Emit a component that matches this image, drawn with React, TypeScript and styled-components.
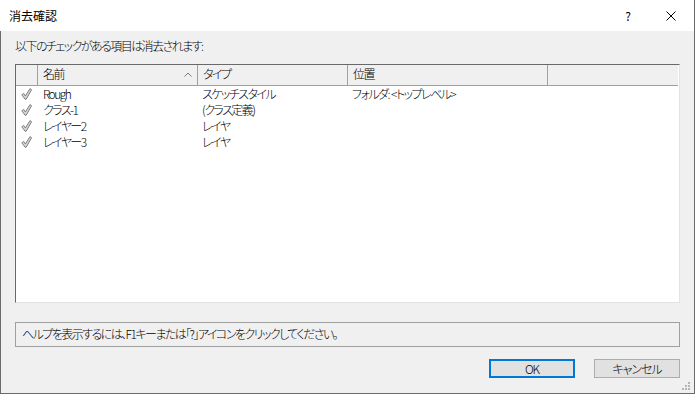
import React from 'react';
import styled, { createGlobalStyle } from 'styled-components';

const Global = createGlobalStyle`
  html, body { margin: 0; padding: 0; background: #ffffff; }
  body {
    font-family: "Noto Sans CJK JP", "Noto Sans", sans-serif;
    font-size: 12px;
    color: #000;
    font-feature-settings: "palt" 1;
  }
  * { box-sizing: border-box; }
`;

const Window = styled.div`
  position: relative;
  width: 695px;
  height: 394px;
  display: flex;
  flex-direction: column;
  border-right: 1px solid #6b6b6b;
  border-bottom: 1px solid #6b6b6b;
  background: #f0f0f0;
`;

const TitleBar = styled.div`
  height: 31px;
  flex: none;
  background: #ffffff;
  display: flex;
  align-items: center;
  padding-left: 9px;
`;

const Title = styled.div`
  flex: 1;
  font-size: 12px;
  line-height: 16px;
`;

const CaptionButton = styled.div<{ $shift?: number }>`
  width: 46px;
  height: 31px;
  display: flex;
  align-items: center;
  justify-content: center;
  font-size: 12px;
  line-height: 16px;
  padding-left: ${(p) => p.$shift ?? 0}px;
`;

const Body = styled.div`
  flex: 1;
  display: flex;
  flex-direction: column;
  border-left: 1px solid #6b6b6b;
  padding: 7px 14px 0 14px;
  font-weight: 300;
  letter-spacing: -1.55px;
`;

const Prompt = styled.div`
  height: 16px;
  line-height: 16px;
`;

const List = styled.div`
  margin-top: 10px;
  height: 239px;
  background: #ffffff;
  border: 1px solid;
  border-color: #696969 #e3e3e3 #e3e3e3 #696969;
  display: flex;
  flex-direction: column;
`;

const Header = styled.div`
  display: flex;
  height: 21px;
  flex: none;
  background: #f0f0f0;
  border-bottom: 1px solid #a0a0a0;
  margin-right: 1px;
`;

const HeaderCell = styled.div<{ $w?: number; $last?: boolean }>`
  ${(p) => (p.$w ? `width: ${p.$w}px; flex: none;` : 'flex: 1;')}
  border-right: ${(p) => (p.$last ? 'none' : '1px solid #a0a0a0')};
  display: flex;
  align-items: center;
  justify-content: space-between;
  padding: 0 5px 2px 5px;
  line-height: 16px;
  white-space: nowrap;
`;

const Row = styled.div`
  display: flex;
  height: 16px;
  line-height: 16px;
`;

const Cell = styled.div<{ $w: number; $pad?: number }>`
  width: ${(p) => p.$w}px;
  flex: none;
  padding-left: ${(p) => p.$pad ?? 5}px;
  white-space: pre;
`;

const IconCell = styled.div`
  width: 22px;
  flex: none;
  display: flex;
  align-items: center;
  padding-left: 5px;
`;

const HelpBox = styled.div`
  margin-top: 19px;
  height: 25px;
  border: 1px solid #a0a0a0;
  display: flex;
  align-items: center;
  padding: 0 0 1px 6px;
  line-height: 16px;
`;

const ButtonRow = styled.div`
  margin-top: 12px;
  display: flex;
  justify-content: flex-end;
  gap: 19px;
`;

const Button = styled.div<{ $default?: boolean }>`
  width: 86px;
  height: 19px;
  background: #e1e1e1;
  border: ${(p) => (p.$default ? '2px solid #0078d7' : '1px solid #adadad')};
  display: flex;
  align-items: center;
  justify-content: center;
  line-height: 16px;
  letter-spacing: -1px;
`;

const Grip = styled.svg`
  position: absolute;
  right: 3px;
  bottom: 2px;
`;

const Check = () => (
  <svg width="11" height="12" viewBox="0 0 11 12">
    <path
      d="M0.8 6.8 L2.7 5.4 L4.4 8 L9 0.6 L10.6 1.7 L5.2 11.2 L4 11.2 Z"
      fill="#d6d6d6"
      stroke="#808080"
      strokeWidth="1"
      strokeLinejoin="round"
    />
  </svg>
);

const SortUp = () => (
  <svg width="8" height="5" viewBox="0 0 8 5">
    <polyline points="0.5,4.5 4,1 7.5,4.5" fill="none" stroke="#7a7a7a" strokeWidth="1" />
  </svg>
);

const CloseIcon = () => (
  <svg width="10" height="10" viewBox="0 0 10 10">
    <line x1="0.5" y1="0.5" x2="9.5" y2="9.5" stroke="#000" strokeWidth="1" />
    <line x1="9.5" y1="0.5" x2="0.5" y2="9.5" stroke="#000" strokeWidth="1" />
  </svg>
);

const rows = [
  { name: 'Rough', type: 'スケッチスタイル', loc: 'フォルダ:  <トップレベル>' },
  { name: 'クラス-1', type: '(クラス定義)', loc: '' },
  { name: 'レイヤー2', type: 'レイヤ', loc: '' },
  { name: 'レイヤー3', type: 'レイヤ', loc: '' },
];

export default function App() {
  return (
    <>
      <Global />
      <Window>
        <TitleBar>
          <Title>消去確認</Title>
          <CaptionButton $shift={6}>?</CaptionButton>
          <CaptionButton>
            <CloseIcon />
          </CaptionButton>
        </TitleBar>
        <Body>
          <Prompt>以下のチェックがある項目は消去されます:</Prompt>
          <List>
            <Header>
              <HeaderCell $w={22} />
              <HeaderCell $w={160}>
                <span>名前</span>
                <SortUp />
              </HeaderCell>
              <HeaderCell $w={150}>タイプ</HeaderCell>
              <HeaderCell $w={200}>位置</HeaderCell>
              <HeaderCell $last />
            </Header>
            {rows.map((r) => (
              <Row key={r.name}>
                <IconCell>
                  <Check />
                </IconCell>
                <Cell $w={160}>{r.name}</Cell>
                <Cell $w={150} $pad={4}>{r.type}</Cell>
                <Cell $w={200} $pad={4}>{r.loc}</Cell>
              </Row>
            ))}
          </List>
          <HelpBox>ヘルプを表示するには、F1キーまたは「?」アイコンをクリックしてください。</HelpBox>
          <ButtonRow>
            <Button $default>OK</Button>
            <Button>キャンセル</Button>
          </ButtonRow>
        </Body>
        <Grip width="9" height="9" viewBox="0 0 9 9">
          <rect x="6" y="0" width="2" height="2" fill="#b5b5b5" />
          <rect x="3" y="3" width="2" height="2" fill="#b5b5b5" />
          <rect x="6" y="3" width="2" height="2" fill="#b5b5b5" />
          <rect x="0" y="6" width="2" height="2" fill="#b5b5b5" />
          <rect x="3" y="6" width="2" height="2" fill="#b5b5b5" />
          <rect x="6" y="6" width="2" height="2" fill="#b5b5b5" />
        </Grip>
      </Window>
    </>
  );
}
